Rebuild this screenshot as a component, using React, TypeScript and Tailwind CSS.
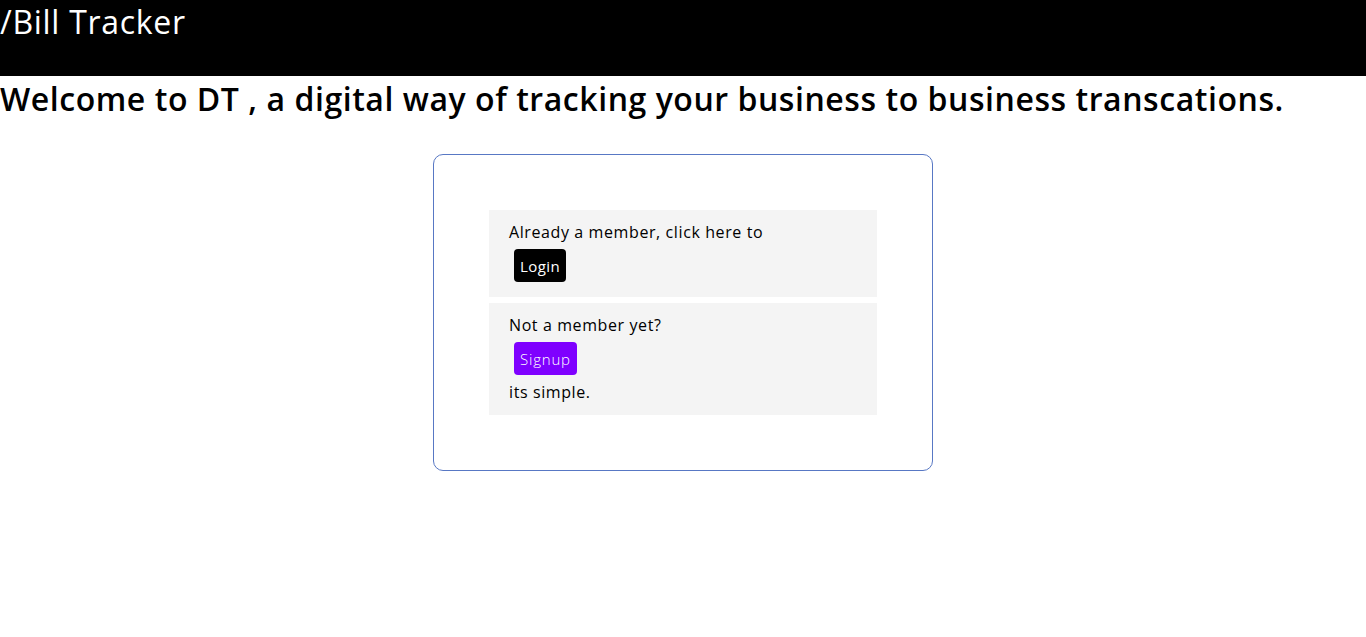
import React from "react";

export default function App() {
  return (
    <div className="min-h-[637px] bg-white text-black" style={{ fontFamily: '"Open Sans", "Noto Sans", sans-serif' }}>
      <header className="h-[76px] bg-black">
        <div className="pt-[2px] pl-0 text-[32px] leading-[40px] font-medium tracking-[0.7px] text-white">/Bill Tracker</div>
      </header>
      <h1 className="mt-[1px] text-[32px] leading-[44px] font-semibold tracking-[0.55px]">
        Welcome to DT , a digital way of tracking your business to business transcations.
      </h1>
      <div className="mt-[33px] flex justify-center">
        <div className="w-[500px] rounded-[10px] border border-[#5878c4] p-[55px]">
          <div className="flex flex-col gap-[6px]">
            <div className="bg-[#f4f4f4] px-[20px] py-[10px] text-[16px] leading-[24px] tracking-[0.6px]">
              <div>Already a member, click here to</div>
              <button className="m-[5px] h-[33px] rounded-[4px] bg-black px-[6px] text-[15px] tracking-[0.4px] text-white">Login</button>
            </div>
            <div className="bg-[#f4f4f4] px-[20px] pt-[10px] pb-[11px] text-[16px] leading-[24px] tracking-[0.6px]">
              <div>Not a member yet?</div>
              <button className="m-[5px] h-[33px] rounded-[4px] bg-[#7f00ff] px-[6px] text-[15px] font-light tracking-[0.8px] text-white">Signup</button>
              <div>its simple.</div>
            </div>
          </div>
        </div>
      </div>
    </div>
  );
}
